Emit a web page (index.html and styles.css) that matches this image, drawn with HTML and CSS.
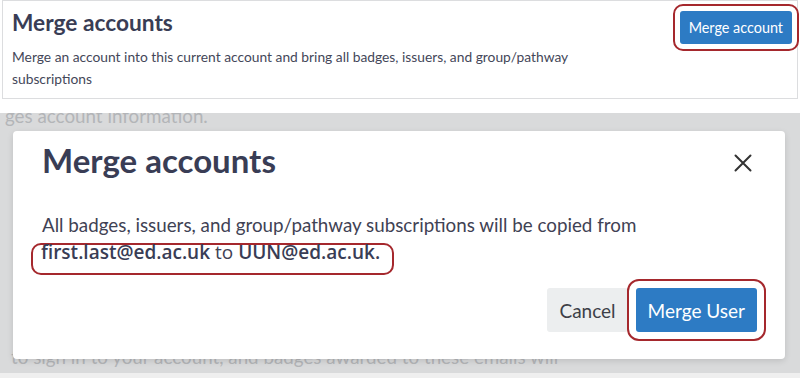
FILE: index.html
```html
<!DOCTYPE html>
<html lang="en">
<head>
<meta charset="utf-8">
<title>Merge accounts</title>
<link rel="stylesheet" href="styles.css">
</head>
<body>
<section class="top">
  <div class="card">
    <div class="card-text">
      <h2 class="card-title">Merge accounts</h2>
      <p class="card-desc">Merge an account into this current account and bring all badges, issuers, and group/pathway subscriptions</p>
    </div>
    <button class="btn btn-primary btn-small ring">Merge account</button>
  </div>
</section>
<section class="backdrop">
  <div class="bg-content">
    <p class="bg-line first">ges account information.</p>
    <p class="bg-line last">to sign in to your account, and badges awarded to these emails will</p>
  </div>
  <div class="modal">
    <div class="modal-head">
      <h1 class="modal-title">Merge accounts</h1>
      <button class="close" aria-label="Close">
        <svg width="18" height="18" viewBox="0 0 18 18"><path d="M1.5 1.5 L16.5 16.5 M16.5 1.5 L1.5 16.5" stroke="#333" stroke-width="2" fill="none" stroke-linecap="round"/></svg>
      </button>
    </div>
    <p class="modal-text">All badges, issuers, and group/pathway subscriptions will be copied from</p>
    <div class="highlight"><strong>first.last@ed.ac.uk</strong> to <strong>UUN@ed.ac.uk.</strong></div>
    <div class="modal-actions">
      <button class="btn btn-secondary btn-large">Cancel</button>
      <button class="btn btn-primary btn-large ring ring-lg">Merge User</button>
    </div>
  </div>
</section>
<div class="bottom-strip"></div>
</body>
</html>
```
FILE: styles.css
```css
* { box-sizing: border-box; }
html, body { margin: 0; padding: 0; }
body {
  width: 800px;
  height: 378px;
  overflow: hidden;
  background: #ffffff;
  font-family: Lato, "Open Sans", sans-serif;
  color: #3c3f54;
}
.top {
  height: 113px;
  padding: 0 2px;
  background: #ffffff;
}
.card {
  height: 99px;
  border: 1px solid #dcdddf;
  display: flex;
  justify-content: space-between;
  align-items: flex-start;
  padding: 9px 4px 0 9px;
}
.card-text { width: 600px; }
.card-title {
  margin: 0;
  font-size: 22.7px;
  line-height: 26px;
  font-weight: 700;
  color: #393d55;
}
.card-desc {
  margin: 10px 0 0;
  font-size: 13.8px;
  line-height: 22px;
  color: #444759;
}
.btn {
  font-family: Lato, "Open Sans", sans-serif;
  font-weight: 400;
  border: none;
  border-radius: 3px;
  cursor: pointer;
}
.btn-primary { background: #2d7bc4; color: #ffffff; }
.btn-secondary { background: #eceeef; color: #3d3f47; }
.btn-small {
  height: 33px;
  padding: 0 9px;
  font-family: Lato, sans-serif;
  font-size: 14.4px;
  margin: 1px 1px 0 0;
}
.ring {
  outline: 2.5px solid #a5282d;
  outline-offset: 5px;
}
.ring-lg { outline-offset: 7px; }
.backdrop {
  position: relative;
  height: 260px;
  background: #d9dadb;
  overflow: hidden;
}
.bg-line {
  margin: 0;
  font-size: 18.8px;
  line-height: 22px;
  color: #b3b5b8;
  white-space: nowrap;
}
.bg-line.first { margin-top: -8px; padding-left: 5px; }
.bg-line.last { margin-top: 219px; padding-left: 11px; }
.modal {
  position: absolute;
  left: 13px;
  top: 18px;
  width: 772px;
  height: 228px;
  background: #ffffff;
  border-radius: 4px;
  box-shadow: 0 2px 6px rgba(0,0,0,0.12);
  padding: 11px 28px 0 29px;
}
.modal-head {
  display: flex;
  justify-content: space-between;
  align-items: center;
}
.modal-title {
  margin: 0;
  font-size: 33px;
  line-height: 36px;
  font-weight: 700;
  color: #393d55;
}
.close {
  background: none;
  border: none;
  padding: 0;
  margin: 5px 5px 0 0;
  width: 18px;
  height: 18px;
  display: flex;
}
.modal-text {
  margin: 35px 0 0;
  font-size: 18.8px;
  line-height: 24px;
  color: #3f4254;
}
.highlight {
  display: inline-block;
  margin: 6px 0 0 -11px;
  border: 2.5px solid #a5282d;
  border-radius: 10px;
  padding: 1px 12px 15px 8px;
  font-family: "Open Sans", Lato, sans-serif;
  font-size: 19px;
  line-height: 12px;
  color: #3f4254;
}
.highlight strong { font-weight: 600; color: #393d55; }
.modal-actions {
  display: flex;
  justify-content: flex-end;
  gap: 8px;
  margin-top: 13px;
}
.btn-large {
  height: 44px;
  font-size: 19px;
  padding: 0 12px;
}
.bottom-strip {
  height: 5px;
  background: #efefef;
}
```
